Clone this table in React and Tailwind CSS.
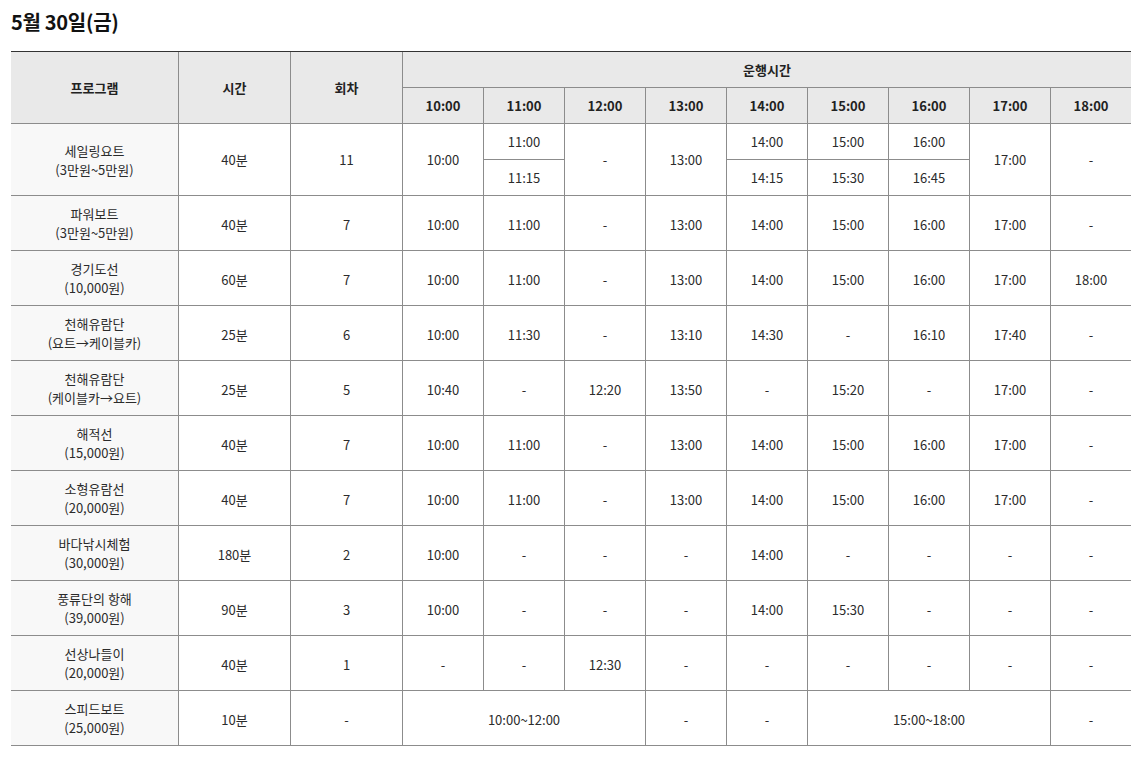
import React from "react";

const cols = ["10:00", "11:00", "12:00", "13:00", "14:00", "15:00", "16:00", "17:00", "18:00"];

// 일반 행: [이름, 요금, 시간, 회차, 운행시간 9칸]
const rows = [
  ["파워보트", "(3만원~5만원)", "40분", "7", ["10:00", "11:00", "-", "13:00", "14:00", "15:00", "16:00", "17:00", "-"]],
  ["경기도선", "(10,000원)", "60분", "7", ["10:00", "11:00", "-", "13:00", "14:00", "15:00", "16:00", "17:00", "18:00"]],
  ["천해유람단", "(요트→케이블카)", "25분", "6", ["10:00", "11:30", "-", "13:10", "14:30", "-", "16:10", "17:40", "-"]],
  ["천해유람단", "(케이블카→요트)", "25분", "5", ["10:40", "-", "12:20", "13:50", "-", "15:20", "-", "17:00", "-"]],
  ["해적선", "(15,000원)", "40분", "7", ["10:00", "11:00", "-", "13:00", "14:00", "15:00", "16:00", "17:00", "-"]],
  ["소형유람선", "(20,000원)", "40분", "7", ["10:00", "11:00", "-", "13:00", "14:00", "15:00", "16:00", "17:00", "-"]],
  ["바다낚시체험", "(30,000원)", "180분", "2", ["10:00", "-", "-", "-", "14:00", "-", "-", "-", "-"]],
  ["풍류단의 항해", "(39,000원)", "90분", "3", ["10:00", "-", "-", "-", "14:00", "15:30", "-", "-", "-"]],
  ["선상나들이", "(20,000원)", "40분", "1", ["-", "-", "12:30", "-", "-", "-", "-", "-", "-"]],
];

const cell = "border-b border-r border-[#8c8c8c] text-center align-middle p-0";
const last = "border-b border-[#8c8c8c] text-center align-middle p-0";
// 55px 행의 한 줄짜리 칸은 살짝 아래로
const low = "pt-[3px]";

const Program = ({ name, price, ...rest }) => (
  <td className={`${cell} bg-[#f8f8f8] leading-[19px]`} {...rest}>
    <div>{name}</div>
    <div>{price}</div>
  </td>
);

export default function App() {
  return (
    <div
      className="w-[1142px] bg-white px-[11px] text-[13px] text-[#2b2b2b]"
      style={{ fontFamily: '"Noto Sans CJK KR", "Noto Sans", sans-serif' }}
    >
      <div className="h-[51px] pt-[8px]">
        <h2 className="text-[20px] leading-[28px] font-bold text-[#111] tracking-[-0.3px]">5월 30일(금)</h2>
      </div>

      <table className="w-[1120px] table-fixed border-separate border-spacing-0 border-t border-[#333]">
        <colgroup>
          <col className="w-[168px]" />
          <col className="w-[112px]" />
          <col className="w-[112px]" />
          {cols.map((c, i) => (
            <col key={c} className={i === 8 ? "w-[80px]" : "w-[81px]"} />
          ))}
        </colgroup>
        <thead className="bg-[#e9e9e9] font-bold text-[#222]">
          <tr className="h-[36px]">
            <th rowSpan={2} className={cell}>프로그램</th>
            <th rowSpan={2} className={cell}>시간</th>
            <th rowSpan={2} className={cell}>회차</th>
            <th colSpan={9} className={last}>운행시간</th>
          </tr>
          <tr className="h-[36px]">
            {cols.map((c, i) => (
              <th key={c} className={i === 8 ? last : cell}>{c}</th>
            ))}
          </tr>
        </thead>
        <tbody>
          {/* 세일링요트: 2회씩 나뉜 칸 */}
          <tr className="h-[36px]">
            <Program name="세일링요트" price="(3만원~5만원)" rowSpan={2} />
            <td rowSpan={2} className={cell}>40분</td>
            <td rowSpan={2} className={cell}>11</td>
            <td rowSpan={2} className={cell}>10:00</td>
            <td className={cell}>11:00</td>
            <td rowSpan={2} className={cell}>-</td>
            <td rowSpan={2} className={cell}>13:00</td>
            <td className={cell}>14:00</td>
            <td className={cell}>15:00</td>
            <td className={cell}>16:00</td>
            <td rowSpan={2} className={cell}>17:00</td>
            <td rowSpan={2} className={last}>-</td>
          </tr>
          <tr className="h-[36px]">
            <td className={cell}>11:15</td>
            <td className={cell}>14:15</td>
            <td className={cell}>15:30</td>
            <td className={cell}>16:45</td>
          </tr>

          {rows.map(([name, price, time, count, times], r) => (
            <tr key={r} className="h-[55px]">
              <Program name={name} price={price} />
              <td className={`${cell} ${low}`}>{time}</td>
              <td className={`${cell} ${low}`}>{count}</td>
              {times.map((t, i) => (
                <td key={i} className={`${i === 8 ? last : cell} ${low}`}>{t}</td>
              ))}
            </tr>
          ))}

          <tr className="h-[55px]">
            <Program name="스피드보트" price="(25,000원)" />
            <td className={`${cell} ${low}`}>10분</td>
            <td className={`${cell} ${low}`}>-</td>
            <td colSpan={3} className={`${cell} ${low}`}>10:00~12:00</td>
            <td className={`${cell} ${low}`}>-</td>
            <td className={`${cell} ${low}`}>-</td>
            <td colSpan={3} className={`${cell} ${low}`}>15:00~18:00</td>
            <td className={`${last} ${low}`}>-</td>
          </tr>
        </tbody>
      </table>
    </div>
  );
}
